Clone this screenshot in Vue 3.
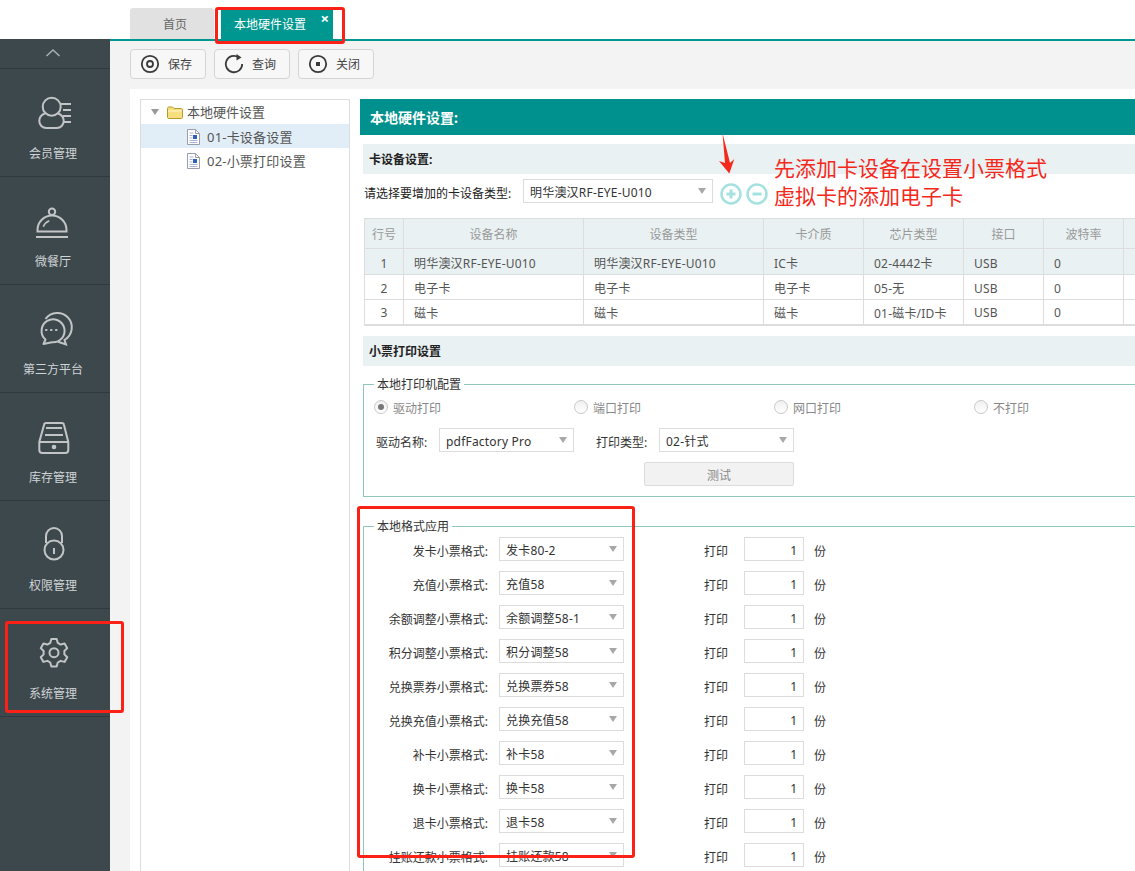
<script setup>
const navItems = [
  { label: '会员管理', icon: 'member' },
  { label: '微餐厅', icon: 'dish' },
  { label: '第三方平台', icon: 'chat' },
  { label: '库存管理', icon: 'store' },
  { label: '权限管理', icon: 'lock' },
  { label: '系统管理', icon: 'gear' },
]
const columns = ['行号', '设备名称', '设备类型', '卡介质', '芯片类型', '接口', '波特率', '']
const rows = [
  ['1', '明华澳汉RF-EYE-U010', '明华澳汉RF-EYE-U010', 'IC卡', '02-4442卡', 'USB', '0', ''],
  ['2', '电子卡', '电子卡', '电子卡', '05-无', 'USB', '0', ''],
  ['3', '磁卡', '磁卡', '磁卡', '01-磁卡/ID卡', 'USB', '0', ''],
]
const radios = ['驱动打印', '端口打印', '网口打印', '不打印']
const formats = [
  ['发卡小票格式:', '发卡80-2'],
  ['充值小票格式:', '充值58'],
  ['余额调整小票格式:', '余额调整58-1'],
  ['积分调整小票格式:', '积分调整58'],
  ['兑换票券小票格式:', '兑换票券58'],
  ['兑换充值小票格式:', '兑换充值58'],
  ['补卡小票格式:', '补卡58'],
  ['换卡小票格式:', '换卡58'],
  ['退卡小票格式:', '退卡58'],
  ['挂账还款小票格式:', '挂账还款58'],
]
function polar(r, deg) {
  const a = (deg * Math.PI) / 180
  return `${(23 + r * Math.cos(a)).toFixed(2)} ${(21.7 + r * Math.sin(a)).toFixed(2)}`
}
const gearPath = (() => {
  const pts = []
  for (let i = 0; i < 6; i++) {
    const c = -90 + i * 60
    pts.push(polar(10.5, c - 21), polar(14, c - 11), polar(14, c + 11), polar(10.5, c + 21))
  }
  return 'M' + pts.join('L') + 'Z'
})()
</script>

<template>
  <div class="app">
    <header class="tabbar">
      <div class="tab">首页</div>
      <div class="tab active">本地硬件设置<span class="close">×</span></div>
    </header>
    <div class="body">
      <aside class="sidebar">
        <div class="collapse">
          <svg width="16" height="10" viewBox="0 0 16 10"><path d="M1.500 8 8 2l6.500 6" fill="none" stroke="#a9afb2" stroke-width="1.500"/></svg>
        </div>
        <div v-for="item in navItems" :key="item.label" class="nav-item">
          <svg class="nav-icon" width="44" height="44" viewBox="0 0 44 44" fill="none" stroke="#c2c4c5" stroke-width="2">
            <template v-if="item.icon === 'member'">
              <circle cx="20.700" cy="15.700" r="9"/>
              <path d="M14 22.500c-3 1-5.700 3.500-5.700 7.500 0 4 3 7 7 7h10.400c4 0 7-3 7-7 0-4-2.700-6.500-5.700-7.500"/>
              <path d="M30 13h10M32 19h8M32 25h8M32 31h8"/>
            </template>
            <template v-else-if="item.icon === 'dish'">
              <circle cx="21" cy="12.700" r="3.200"/>
              <path d="M6.500 32.500v-1.500a14.500 14.500 0 0 1 29 0v1.500zM5 38h32"/>
              <path d="M12.300 27.700c1-2.500 3-4.800 6-6" stroke-width="1.600"/>
            </template>
            <template v-else-if="item.icon === 'chat'">
              <path d="M14.500 32.500A11.500 11.500 0 1 1 21 35.300L12.500 37Z" stroke-linejoin="round"/>
              <path d="M14.500 12A14.500 14.500 0 1 1 33.500 33L35 37.500 27 34.800"/>
              <path d="M15 23h.5M20 23h.5M25 23h.5" stroke-linecap="round" stroke-width="2.200"/>
            </template>
            <template v-else-if="item.icon === 'store'">
              <path d="M15 8h16c1 0 1.800.7 2 2l4.300 17v8c0 2-1 3-3 3H11.300c-2 0-3-1-3-3v-8L13 10c.2-1.300 1-2 2-2zM8.300 27h29"/>
              <path d="M15 13h16M14 20h18"/>
              <circle cx="23" cy="32" r="1.300" fill="#c2c4c5"/>
            </template>
            <template v-else-if="item.icon === 'lock'">
              <path d="M15 20v-7a8 8 0 0 1 16 0v7"/>
              <circle cx="23" cy="27" r="9.500"/>
              <path d="M23 25v6"/>
            </template>
            <template v-else>
              <path :d="gearPath" stroke-linejoin="round"/>
              <circle cx="23" cy="21.700" r="4.500"/>
            </template>
          </svg>
          <span class="nav-label">{{ item.label }}</span>
        </div>
      </aside>

      <main class="main">
        <div class="toolbar">
          <button class="tool-btn">
            <svg width="20" height="20" viewBox="0 0 20 20" fill="none" stroke="#3a3a3a" stroke-width="1.800"><circle cx="10" cy="10" r="8.200"/><circle cx="10" cy="10" r="3"/></svg>
            保存
          </button>
          <button class="tool-btn">
            <svg width="20" height="20" viewBox="0 0 20 20" fill="none" stroke="#3a3a3a" stroke-width="1.800"><path d="M14.500 3.200A8.200 8.200 0 1 0 18.200 10"/><path d="M12.500 0 17.500 3.500l-5 3z" fill="#3a3a3a" stroke="none"/></svg>
            查询
          </button>
          <button class="tool-btn">
            <svg width="20" height="20" viewBox="0 0 20 20" fill="none" stroke="#3a3a3a" stroke-width="1.800"><circle cx="10" cy="10" r="8.200"/><rect x="8" y="8" width="4" height="4" fill="#3a3a3a" stroke="none"/></svg>
            关闭
          </button>
        </div>

        <div class="content">
          <nav class="tree">
            <div class="tree-row root">
              <span class="caret"></span>
              <svg width="16" height="13" viewBox="0 0 16 13"><path d="M.5 11V2.500c0-1 .5-1.500 1.500-1.500h3.500l1.500 1.500H14c1 0 1.500.5 1.500 1.500V11c0 1-.5 1.500-1.500 1.500H2C1 12.500.5 12 .5 11z" fill="#f7df7e" stroke="#b8992e"/><path d="M1 5h14" stroke="#fff6c8"/></svg>
              本地硬件设置
            </div>
            <div class="tree-row leaf selected">
              <svg width="13" height="16" viewBox="0 0 13 16"><path d="M.5.5h8l4 4v11H.5z" fill="#fff" stroke="#9a9eaa"/><path d="M8.500.5v4h4" fill="none" stroke="#9a9eaa"/><path d="M2.500 4h4M2.500 6.500h3M2.500 9h3M2.500 11.500h8M2.500 13.500h8" stroke="#aab1d8"/><rect x="6" y="6" width="4" height="4" fill="#2f5fc0"/></svg>
              01-卡设备设置
            </div>
            <div class="tree-row leaf">
              <svg width="13" height="16" viewBox="0 0 13 16"><path d="M.5.5h8l4 4v11H.5z" fill="#fff" stroke="#9a9eaa"/><path d="M8.500.5v4h4" fill="none" stroke="#9a9eaa"/><path d="M2.500 4h4M2.500 6.500h3M2.500 9h3M2.500 11.500h8M2.500 13.500h8" stroke="#aab1d8"/><rect x="6" y="6" width="4" height="4" fill="#2f5fc0"/></svg>
              02-小票打印设置
            </div>
          </nav>

          <section class="panel">
            <div class="panel-title">本地硬件设置:</div>

            <h3 class="section-head first">卡设备设置:</h3>
            <div class="device-row">
              <span class="device-label nudge">请选择要增加的卡设备类型:</span>
              <div class="select device-select">明华澳汉RF-EYE-U010</div>
              <svg class="round-btn" width="22" height="22" viewBox="0 0 22 22"><circle cx="11" cy="11" r="9.500" fill="#fff" stroke="#a6e1e1" stroke-width="2.500"/><path d="M6.500 11h9M11 6.500v9" stroke="#a6e1e1" stroke-width="3"/></svg>
              <svg class="round-btn" width="22" height="22" viewBox="0 0 22 22"><circle cx="11" cy="11" r="9.500" fill="#fff" stroke="#a6e1e1" stroke-width="2.500"/><path d="M6.500 11h9" stroke="#a6e1e1" stroke-width="3"/></svg>
            </div>

            <table class="grid">
              <colgroup>
                <col class="c-no"><col class="c-wide"><col class="c-wide"><col class="c-mid"><col class="c-mid"><col class="c-small"><col class="c-small"><col class="c-small">
              </colgroup>
              <thead>
                <tr><th v-for="(c, i) in columns" :key="i">{{ c }}</th></tr>
              </thead>
              <tbody>
                <tr v-for="(r, i) in rows" :key="i" :class="{ hot: i === 0 }">
                  <td v-for="(v, j) in r" :key="j" :class="{ num: j === 0 }">{{ v }}</td>
                </tr>
              </tbody>
            </table>

            <h3 class="section-head second">小票打印设置</h3>

            <fieldset class="group printer">
              <legend>本地打印机配置</legend>
              <div class="radio-row">
                <label v-for="(r, i) in radios" :key="r" class="radio">
                  <span class="dot" :class="{ on: i === 0 }"></span><span class="nudge">{{ r }}</span>
                </label>
              </div>
              <div class="driver-row">
                <span class="driver-label nudge">驱动名称:</span>
                <div class="select driver">pdfFactory Pro</div>
                <span class="type-label nudge">打印类型:</span>
                <div class="select driver">02-针式</div>
              </div>
              <div class="test-btn">测试</div>
            </fieldset>

            <fieldset class="group formats">
              <legend>本地格式应用</legend>
              <div v-for="f in formats" :key="f[0]" class="format-row">
                <span class="format-label nudge">{{ f[0] }}</span>
                <div class="select format">{{ f[1] }}</div>
                <span class="print-word nudge">打印</span>
                <div class="copies">1</div>
                <span class="unit nudge">份</span>
              </div>
            </fieldset>
          </section>
        </div>
      </main>
    </div>

    <div class="mark mark-tab"></div>
    <div class="mark mark-nav"></div>
    <div class="mark mark-format"></div>
    <svg class="arrow" width="16" height="41" viewBox="0 0 16 41"><path d="M3.500 0 11 30l4.300-4-5 14.500L0 28l6 2z" fill="#f5281c"/></svg>
    <div class="note">先添加卡设备在设置小票格式<br>虚拟卡的添加电子卡</div>
  </div>
</template>

<style>
html, body { margin: 0; background: #fff; }
</style>

<style scoped>
.app {
  position: relative;
  width: 1135px;
  height: 871px;
  overflow: hidden;
  font-family: "Noto Sans", "Noto Sans CJK SC", sans-serif;
  font-size: 12px;
  color: #333;
  background: #fff;
}
.tabbar {
  height: 39px;
  box-sizing: border-box;
  padding-left: 130px;
  display: flex;
  align-items: flex-end;
  gap: 7px;
}
.tab {
  position: relative;
  width: 84px;
  height: 31px;
  box-sizing: border-box;
  padding-left: 33px;
  line-height: 34px;
  background: #e1e1e1;
  border-radius: 3px 3px 0 0;
  color: #666;
  font-size: 12px;
}
.tab.active {
  width: 112px;
  padding-left: 13px;
  background: #009790;
  color: #fff;
  border-radius: 0;
}
.close {
  position: absolute;
  top: -7px;
  right: 4px;
  font-size: 15px;
  font-weight: 700;
  color: #fff;
}
.body {
  display: flex;
  height: 832px;
}
.sidebar {
  width: 110px;
  flex: none;
  background: #3d484d;
}
.collapse {
  height: 30px;
  border-bottom: 1px solid #30393d;
  box-sizing: border-box;
  display: flex;
  justify-content: center;
  padding: 9px 4px 0 0;
}
.nav-item {
  height: 108px;
  box-sizing: border-box;
  border-bottom: 1px solid #30393d;
  display: flex;
  flex-direction: column;
  align-items: center;
  padding: 22px 4px 0 0;
}
.nav-label {
  margin-top: 9px;
  line-height: 20px;
  color: #d0d4d6;
}
.main {
  flex: 1;
  min-width: 0;
  border-top: 2px solid #009790;
  background: #f3f3f3;
  display: flex;
  flex-direction: column;
}
.toolbar {
  height: 48px;
  box-sizing: border-box;
  padding: 8px 0 0 20px;
  display: flex;
  gap: 8px;
}
.tool-btn {
  width: 76px;
  height: 30px;
  box-sizing: border-box;
  border: 1px solid #d4d4d4;
  border-radius: 4px;
  background: #f7f7f7;
  display: flex;
  align-items: center;
  gap: 8px;
  padding: 0 0 0 9px;
  font: inherit;
  color: #444;
}
.content {
  flex: 1;
  min-height: 0;
  margin-left: 20px;
  background: #fff;
  padding: 10px 0 0 10px;
  display: flex;
  gap: 10px;
}
.tree {
  width: 210px;
  flex: none;
  box-sizing: border-box;
  border: 1px solid #ddd;
  border-bottom: 0;
  font-size: 13px;
  color: #555;
}
.tree-row {
  height: 24px;
  box-sizing: border-box;
  display: flex;
  align-items: center;
  line-height: 24px;
}
.tree-row.root {
  padding-left: 10px;
  gap: 4px;
}
.caret {
  width: 0;
  height: 0;
  border-left: 4.5px solid transparent;
  border-right: 4.5px solid transparent;
  border-top: 6px solid #999;
  margin-right: 4px;
}
.tree-row.leaf {
  padding: 2px 0 0 46px;
  gap: 7px;
  letter-spacing: .2px;
}
.tree-row.selected {
  background: #e1edf7;
}
.panel {
  flex: 1;
  min-width: 0;
  overflow: hidden;
}
.panel-title {
  height: 36px;
  line-height: 37px;
  padding-left: 10px;
  background: #00918e;
  color: #fff;
  font-size: 14px;
  font-weight: 700;
}
.section-head {
  margin: 0 0 0 3px;
  height: 30px;
  line-height: 32px;
  padding-left: 6px;
  background: #e9f1f2;
  color: #222;
  font-size: 12px;
  font-weight: 700;
}
.section-head.first {
  margin-top: 9px;
}
.section-head.second {
  margin-top: 10px;
}
.nudge {
  padding-top: 4px;
}
.device-row {
  display: flex;
  align-items: center;
  height: 24px;
  margin-top: 5px;
  padding-left: 4px;
}
.device-label {
  width: 159px;
  flex: none;
  white-space: nowrap;
  color: #222;
}
.round-btn {
  margin-left: 2px;
  margin-top: 6px;
  margin-right: 2px;
  flex: none;
}
.device-select {
  margin-right: 5px;
}
.select {
  position: relative;
  box-sizing: border-box;
  height: 24px;
  line-height: 25px;
  padding-left: 6px;
  border: 1px solid #dcdcdc;
  background: #fff;
  color: #333;
  white-space: nowrap;
  flex: none;
  letter-spacing: .2px;
}
.select::after {
  content: "";
  position: absolute;
  top: 8px;
  right: 6px;
  border-left: 4.5px solid transparent;
  border-right: 4.5px solid transparent;
  border-top: 6px solid #a8a8a8;
}
.device-select { width: 190px; }
.grid {
  margin: 15px 0 0 4px;
  width: 800px;
  table-layout: fixed;
  border-collapse: collapse;
  border-top: 1px solid #ddd;
  border-left: 1px solid #ddd;
  border-bottom: 2px solid #ddd;
}
.c-no { width: 39px; }
.c-wide { width: 180px; }
.c-mid { width: 100px; }
.c-small { width: 80px; }
.grid th {
  height: 29px;
  padding: 0;
  background: #e9f1f2;
  border-right: 1px solid #ddd;
  border-bottom: 1px solid #ddd;
  color: #999;
  font-weight: 400;
}
.grid td {
  height: 25px;
  box-sizing: border-box;
  padding: 2px 0 0 10px;
  border-right: 1px solid #ddd;
  border-bottom: 1px solid #ddd;
  color: #555;
  white-space: nowrap;
  letter-spacing: .2px;
}
.grid td.num {
  padding: 2px 0 0;
  text-align: center;
}
.grid tr.hot td {
  height: 26px;
  padding-top: 3px;
  background: #e9f1f2;
}
.group {
  margin: 0 0 0 3px;
  width: 800px;
  box-sizing: border-box;
  padding: 0;
  border: 0;
  border-top: 1px solid #8ec6c0;
  border-left: 1px solid #8ec6c0;
  min-width: 0;
}
.group legend {
  margin-left: 10px;
  padding: 0 3px;
  line-height: 16px;
  color: #333;
}
.printer {
  margin-top: 11px;
  height: 120px;
  border-bottom: 1px solid #8ec6c0;
}
.formats {
  margin-top: 22px;
  padding-top: 2px;
}
.radio-row {
  display: flex;
  height: 22px;
  margin-top: 3px;
  padding-left: 10px;
}
.radio {
  width: 200px;
  flex: none;
  display: flex;
  align-items: center;
  gap: 5px;
  color: #888;
}
.radio .nudge {
  padding-top: 2px;
}
.dot {
  width: 14px;
  height: 14px;
  box-sizing: border-box;
  border: 1px solid #c8c8c8;
  border-radius: 50%;
  background: linear-gradient(#f0f0f0, #fff);
  display: flex;
  align-items: center;
  justify-content: center;
}
.dot.on::after {
  content: "";
  width: 6px;
  height: 6px;
  border-radius: 50%;
  background: #777;
}
.driver-row {
  display: flex;
  align-items: center;
  height: 24px;
  margin-top: 10px;
  padding-left: 12px;
  color: #333;
}
.driver-label { width: 63px; flex: none; }
.driver { width: 135px; }
.type-label {
  margin-left: 22px;
  width: 63px;
  flex: none;
}
.test-btn {
  width: 150px;
  height: 24px;
  box-sizing: border-box;
  margin: 10px 0 0 280px;
  line-height: 25px;
  text-align: center;
  border: 1px solid #dcdcdc;
  border-radius: 2px;
  background: #f2f2f2;
  color: #888;
}
.format-row {
  height: 24px;
  margin-bottom: 10px;
  display: flex;
  align-items: center;
}
.format-label {
  width: 124px;
  text-align: right;
  color: #333;
  white-space: nowrap;
  flex: none;
}
.format {
  width: 125px;
  margin-left: 11px;
}
.print-word {
  margin-left: 80px;
  width: 40px;
  flex: none;
}
.copies {
  width: 60px;
  height: 24px;
  box-sizing: border-box;
  line-height: 25px;
  padding-right: 6px;
  text-align: right;
  border: 1px solid #dcdcdc;
  flex: none;
}
.unit { margin-left: 10px; }
.mark {
  position: absolute;
  box-sizing: border-box;
  border: 3px solid #fb2116;
  border-radius: 3px;
}
.mark-tab { left: 215px; top: 7px; width: 130px; height: 37px; }
.mark-nav { left: 5px; top: 621px; width: 119px; height: 92px; }
.mark-format { left: 357px; top: 506px; width: 278px; height: 352px; border-width: 3.5px; }
.arrow {
  position: absolute;
  left: 719px;
  top: 133px;
}
.note {
  position: absolute;
  left: 774px;
  top: 153px;
  font-family: "Noto Sans CJK SC", sans-serif;
  font-size: 21px;
  line-height: 28px;
  color: #f5281c;
  white-space: nowrap;
}
</style>
